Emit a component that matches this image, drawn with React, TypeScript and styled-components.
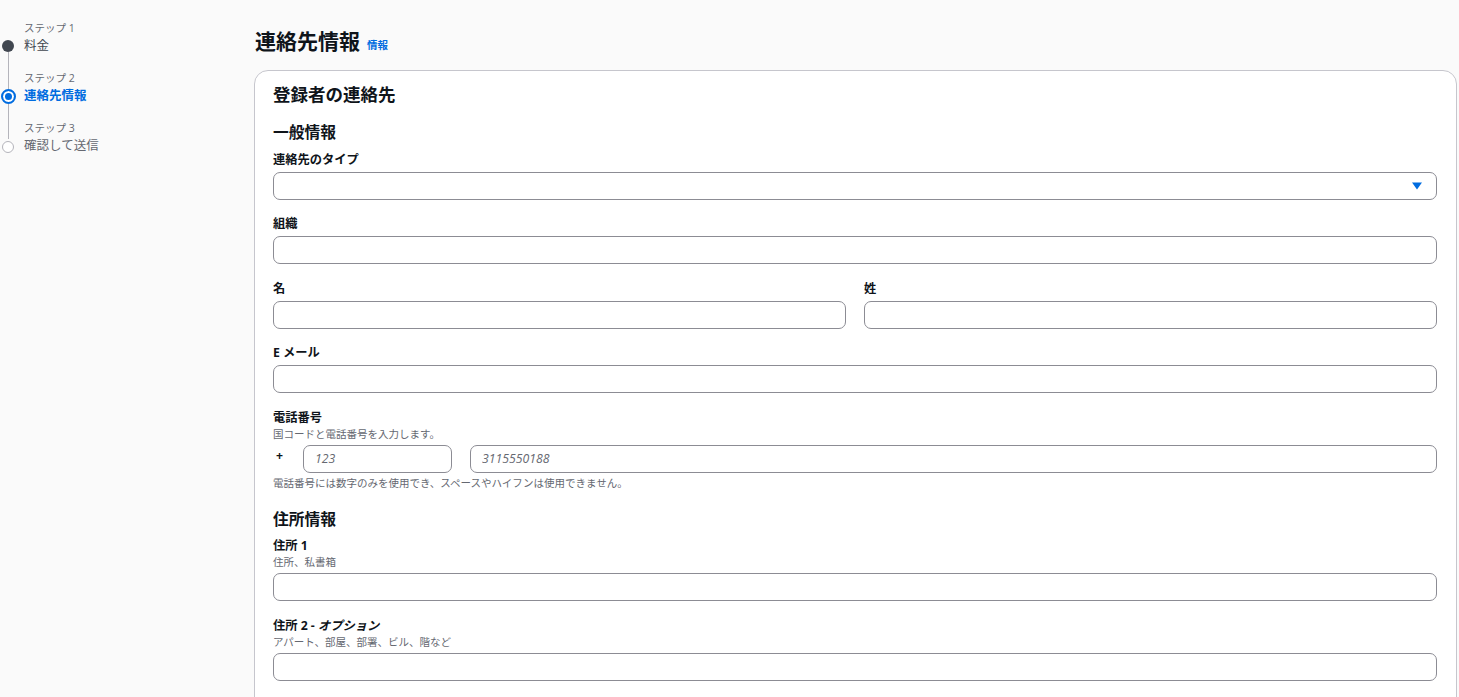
import React from 'react';
import styled, { createGlobalStyle } from 'styled-components';

const GlobalStyle = createGlobalStyle`
  html, body {
    margin: 0;
    padding: 0;
    background: #fafafa;
    overflow: hidden;
  }
  body {
    font-family: "Open Sans", "Noto Sans CJK JP", sans-serif;
    color: #0f141a;
  }
  * { box-sizing: border-box; }
`;

const Page = styled.div`
  display: flex;
  height: 100vh;
  overflow: hidden;
`;

/* ---------- wizard steps ---------- */

const StepNav = styled.nav`
  width: 254px;
  flex-shrink: 0;
  padding-top: 6px;
`;

const Step = styled.div`
  display: grid;
  grid-template-columns: 16px 1fr;
  column-gap: 8px;
`;

const Rail = styled.div<{ $hidden?: boolean }>`
  justify-self: center;
  width: 1px;
  background: ${(p) => (p.$hidden ? 'transparent' : '#b4b4bb')};
`;

const DotCell = styled.div`
  display: flex;
  flex-direction: column;
  align-items: center;
`;

const RailPart = styled.div<{ $hidden?: boolean }>`
  flex: 1;
  width: 1px;
  background: ${(p) => (p.$hidden ? 'transparent' : '#b4b4bb')};
`;

type DotState = 'done' | 'active' | 'todo';

const Dot = styled.span<{ $state: DotState }>`
  display: block;
  flex-shrink: 0;
  border-radius: 50%;
  ${(p) =>
    p.$state === 'done' &&
    `width: 12px; height: 12px; background: #414750;`}
  ${(p) =>
    p.$state === 'active' &&
    `width: 15px; height: 15px; border: 2px solid #006ce0; background: #fff;
     box-shadow: inset 0 0 0 2px #fff, inset 0 0 0 7px #006ce0;`}
  ${(p) =>
    p.$state === 'todo' &&
    `width: 12px; height: 12px; border: 1.5px solid #b4b4bb; background: #fff; margin: 2px 0 0;`}
`;

const StepNumber = styled.div`
  padding-top: 14px;
  font-size: 10.5px;
  line-height: 16px;
  color: #656871;
`;

const StepTitle = styled.div<{ $active?: boolean; $muted?: boolean }>`
  font-size: 12.5px;
  line-height: 20px;
  font-weight: ${(p) => (p.$active ? 700 : 400)};
  color: ${(p) => (p.$active ? '#006ce0' : p.$muted ? '#656871' : '#414750')};
`;

const steps: { n: number; title: string; state: DotState }[] = [
  { n: 1, title: '料金', state: 'done' },
  { n: 2, title: '連絡先情報', state: 'active' },
  { n: 3, title: '確認して送信', state: 'todo' },
];

/* ---------- main form ---------- */

const Main = styled.main`
  flex: 1;
  padding: 28px 2px 0 0;
  min-width: 0;
`;

const PageHeader = styled.div`
  display: flex;
  align-items: baseline;
  gap: 7px;
  margin: 0 0 15px 1px;
`;

const PageTitle = styled.h1`
  margin: 0;
  font-size: 21px;
  line-height: 27px;
  font-weight: 700;
`;

const InfoLink = styled.a`
  font-size: 10.5px;
  font-weight: 700;
  color: #006ce0;
  text-decoration: none;
`;

const Card = styled.section`
  background: #fff;
  border: 1px solid #c6c6cd;
  border-radius: 14px;
  padding: 12px 19px 80px 18px;
`;

const CardTitle = styled.h2`
  margin: 0 0 17px;
  font-size: 17.5px;
  line-height: 22px;
  font-weight: 700;
`;

const Section = styled.div`
  display: flex;
  flex-direction: column;
  gap: 14.5px;
  & + & {
    margin-top: 18px;
  }
`;

const SectionTitle = styled.h3`
  margin: 0 0 -7px;
  font-size: 15.75px;
  line-height: 20px;
  font-weight: 700;
`;

const Field = styled.div`
  display: flex;
  flex-direction: column;
  min-width: 0;
`;

const LabelBlock = styled.div<{ $withDescription?: boolean }>`
  padding-bottom: ${(p) => (p.$withDescription ? 3 : 2)}px;
`;

const Label = styled.label`
  display: block;
  font-size: 12.25px;
  line-height: 20px;
  font-weight: 700;
  color: #0f141a;

  em {
    font-style: italic;
  }
`;

const Description = styled.div`
  margin-top: -1px;
  font-size: 10.5px;
  line-height: 15px;
  color: #656871;
`;

const Constraint = styled.div`
  margin-top: 3px;
  font-size: 10.5px;
  line-height: 15px;
  color: #656871;
`;

const TextInput = styled.input`
  display: block;
  width: 100%;
  height: 28px;
  border: 1px solid #8c8c94;
  border-radius: 7px;
  background: #fff;
  padding: 0 11px;
  font-family: inherit;
  font-size: 12.25px;
  color: #0f141a;
  outline: none;

  &::placeholder {
    color: #656871;
    font-style: italic;
  }
`;

const SelectBox = styled.button`
  display: flex;
  align-items: center;
  justify-content: flex-end;
  width: 100%;
  height: 28px;
  border: 1px solid #8c8c94;
  border-radius: 7px;
  background: #fff;
  padding: 0 14px 0 11px;
  cursor: pointer;
`;

const Caret = styled.svg`
  width: 10px;
  height: 8px;
  margin-top: 1px;
`;

const TwoCols = styled.div`
  display: grid;
  grid-template-columns: 1fr 1fr;
  column-gap: 18px;
`;

const PhoneRow = styled.div`
  display: grid;
  grid-template-columns: 30px 149px 1fr;
  align-items: start;
`;

const Plus = styled.span`
  padding: 3px 0 0 3px;
  font-size: 12.25px;
  line-height: 16px;
  font-weight: 700;
`;

const NumberWrap = styled.div`
  padding-left: 18px;
`;

type FieldProps = {
  label: React.ReactNode;
  description?: string;
  children: React.ReactNode;
};

const FormField: React.FC<FieldProps> = ({ label, description, children }) => (
  <Field>
    <LabelBlock $withDescription={!!description}>
      <Label>{label}</Label>
      {description && <Description>{description}</Description>}
    </LabelBlock>
    {children}
  </Field>
);

export default function App() {
  return (
    <Page>
      <GlobalStyle />
      <StepNav>
        {steps.map((s, i) => (
          <Step key={s.n}>
            <Rail $hidden={i === 0} />
            <StepNumber>ステップ {s.n}</StepNumber>
            <DotCell>
              <RailPart $hidden={i === 0} />
              <Dot $state={s.state} />
              <RailPart $hidden={i === steps.length - 1} />
            </DotCell>
            <StepTitle $active={s.state === 'active'} $muted={s.state === 'todo'}>
              {s.title}
            </StepTitle>
          </Step>
        ))}
      </StepNav>

      <Main>
        <PageHeader>
          <PageTitle>連絡先情報</PageTitle>
          <InfoLink href="#">情報</InfoLink>
        </PageHeader>

        <Card>
          <CardTitle>登録者の連絡先</CardTitle>

          <Section>
            <SectionTitle>一般情報</SectionTitle>
            <FormField label="連絡先のタイプ">
              <SelectBox type="button" aria-label="連絡先のタイプ">
                <Caret viewBox="0 0 10 8">
                  <path d="M0 0.5h10L5 7.5z" fill="#006ce0" />
                </Caret>
              </SelectBox>
            </FormField>
            <FormField label="組織">
              <TextInput />
            </FormField>
            <TwoCols>
              <FormField label="名">
                <TextInput />
              </FormField>
              <FormField label="姓">
                <TextInput />
              </FormField>
            </TwoCols>
            <FormField label="E メール">
              <TextInput />
            </FormField>
            <Field>
              <LabelBlock $withDescription>
                <Label>電話番号</Label>
                <Description>国コードと電話番号を入力します。</Description>
              </LabelBlock>
              <PhoneRow>
                <Plus>+</Plus>
                <TextInput placeholder="123" />
                <NumberWrap>
                  <TextInput placeholder="3115550188" />
                </NumberWrap>
              </PhoneRow>
              <Constraint>
                電話番号には数字のみを使用でき、スペースやハイフンは使用できません。
              </Constraint>
            </Field>
          </Section>

          <Section>
            <SectionTitle>住所情報</SectionTitle>
            <FormField label="住所 1" description="住所、私書箱">
              <TextInput />
            </FormField>
            <FormField
              label={
                <>
                  住所 2 - <em>オプション</em>
                </>
              }
              description="アパート、部屋、部署、ビル、階など"
            >
              <TextInput />
            </FormField>
          </Section>
        </Card>
      </Main>
    </Page>
  );
}
